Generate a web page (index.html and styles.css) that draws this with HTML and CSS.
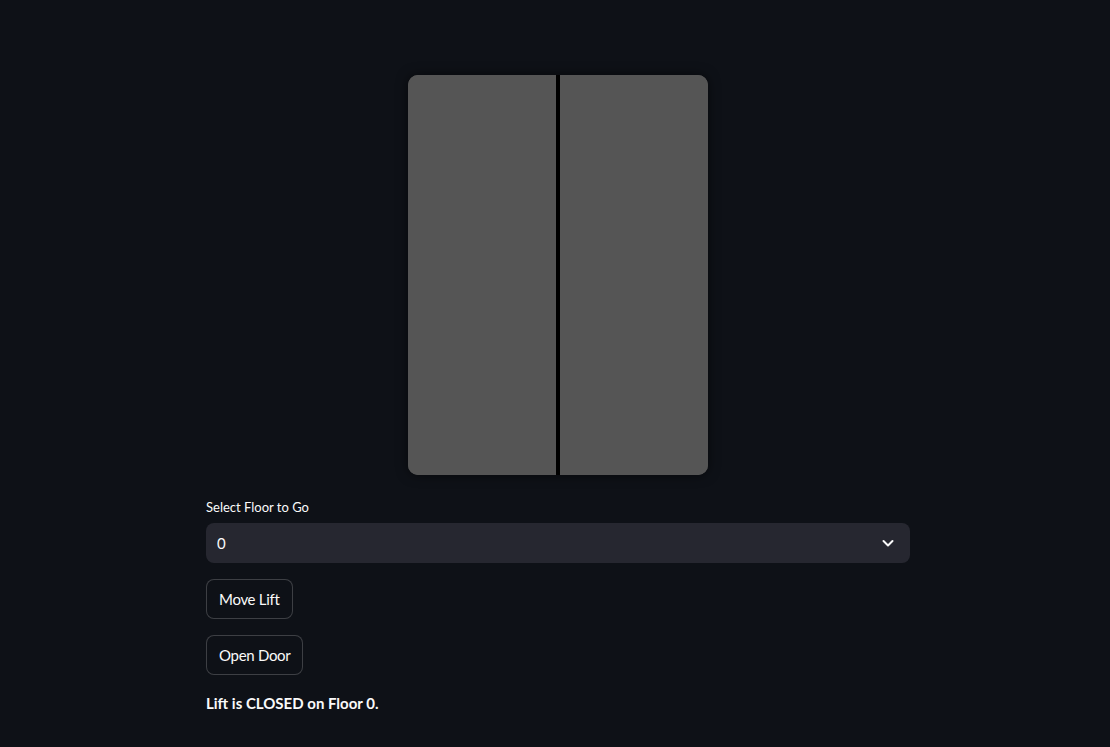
FILE: index.html
```html
<!DOCTYPE html>
<html lang="en">
<head>
<meta charset="utf-8">
<title>Lift</title>
<link rel="stylesheet" href="styles.css">
</head>
<body>
<main class="app">
  <div class="block">
    <div class="lift-wrap">
      <div class="lift">
        <div class="door"></div>
        <div class="gap"></div>
        <div class="door"></div>
      </div>
    </div>
    <div class="field">
      <label class="label">Select Floor to Go</label>
      <div class="select">
        <span class="value">0</span>
        <svg class="chev" width="16" height="16" viewBox="0 0 16 16" aria-hidden="true">
          <path d="M3.5 6 L8 10.5 L12.5 6" fill="none" stroke="#fafafa" stroke-width="2" stroke-linecap="round" stroke-linejoin="round"/>
        </svg>
      </div>
    </div>
    <div class="row"><button class="btn">Move Lift</button></div>
    <div class="row"><button class="btn">Open Door</button></div>
    <p class="status">Lift is CLOSED on Floor 0.</p>
  </div>
</main>
</body>
</html>
```

FILE: styles.css
```css
html, body {
  margin: 0;
  padding: 0;
  background: #0e1117;
  color: #fafafa;
  font-family: "Lato", "Open Sans", sans-serif;
}
.app {
  display: flex;
  justify-content: center;
  padding-top: 75px;
  padding-left: 6px;
}
.block {
  width: 704px;
  display: flex;
  flex-direction: column;
}
.lift-wrap {
  display: flex;
  justify-content: center;
  margin-bottom: 20px;
}
.lift {
  width: 300px;
  height: 400px;
  display: flex;
  border-radius: 10px;
  overflow: hidden;
  box-shadow: 0 0 12px rgba(0, 0, 0, 0.55);
  background: #555555;
}
.door {
  flex: 1;
  background: #555555;
}
.gap {
  width: 4px;
  background: #000;
}
.field {
  display: flex;
  flex-direction: column;
}
.label {
  font-size: 13px;
  line-height: 24px;
  min-height: 24px;
  margin-bottom: 4px;
  color: #fafafa;
}
.select {
  height: 40px;
  background: #262730;
  border-radius: 8px;
  display: flex;
  align-items: center;
  justify-content: space-between;
  padding: 0 14px 0 11px;
  box-sizing: border-box;
  font-size: 15px;
}
.chev {
  display: block;
}
.row {
  margin-top: 16px;
  display: flex;
}
.btn {
  font-family: inherit;
  font-size: 15px;
  letter-spacing: -0.3px;
  color: #fafafa;
  background: #0e1117;
  border: 1px solid rgba(250, 250, 250, 0.2);
  border-radius: 8px;
  height: 40px;
  padding: 0 12px;
  line-height: 1.6;
}
.status {
  margin: 16px 0 0 0;
  font-size: 15px;
  font-weight: 700;
  line-height: 24px;
}
```
